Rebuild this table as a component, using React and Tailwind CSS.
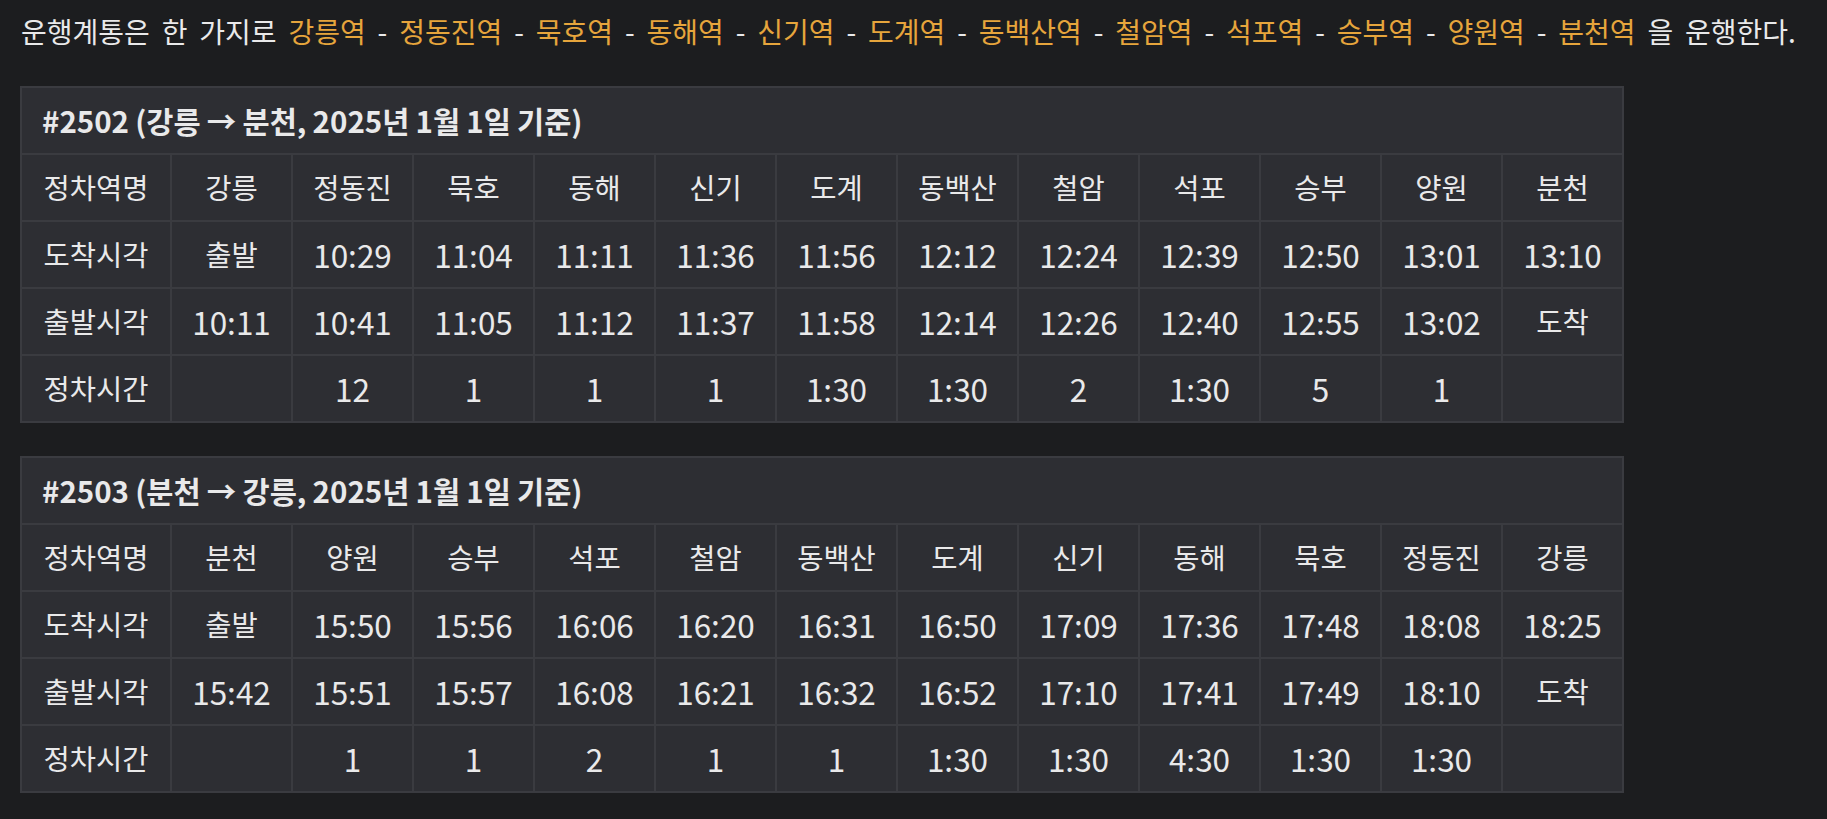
import React from "react";

const stations = [
  "강릉역", "정동진역", "묵호역", "동해역", "신기역", "도계역",
  "동백산역", "철암역", "석포역", "승부역", "양원역", "분천역",
];

const trains = [
  {
    title: "#2502 (강릉 → 분천, 2025년 1월 1일 기준)",
    rows: [
      ["정차역명", "강릉", "정동진", "묵호", "동해", "신기", "도계", "동백산", "철암", "석포", "승부", "양원", "분천"],
      ["도착시각", "출발", "10:29", "11:04", "11:11", "11:36", "11:56", "12:12", "12:24", "12:39", "12:50", "13:01", "13:10"],
      ["출발시각", "10:11", "10:41", "11:05", "11:12", "11:37", "11:58", "12:14", "12:26", "12:40", "12:55", "13:02", "도착"],
      ["정차시간", "", "12", "1", "1", "1", "1:30", "1:30", "2", "1:30", "5", "1", ""],
    ],
  },
  {
    title: "#2503 (분천 → 강릉, 2025년 1월 1일 기준)",
    rows: [
      ["정차역명", "분천", "양원", "승부", "석포", "철암", "동백산", "도계", "신기", "동해", "묵호", "정동진", "강릉"],
      ["도착시각", "출발", "15:50", "15:56", "16:06", "16:20", "16:31", "16:50", "17:09", "17:36", "17:48", "18:08", "18:25"],
      ["출발시각", "15:42", "15:51", "15:57", "16:08", "16:21", "16:32", "16:52", "17:10", "17:41", "17:49", "18:10", "도착"],
      ["정차시간", "", "1", "1", "2", "1", "1", "1:30", "1:30", "4:30", "1:30", "1:30", ""],
    ],
  },
];

const isNumber = (s) => /^[0-9:]+$/.test(s);

function Timetable({ title, rows }) {
  return (
    <table className="table-fixed border-collapse bg-[#2d2e33] w-[1604px]">
      <colgroup>
        <col className="w-[150px]" />
        {rows[0].slice(1).map((_, i) => (
          <col key={i} />
        ))}
      </colgroup>
      <thead>
        <tr>
          <th colSpan={13} className="h-[67px] border-2 border-[#3a3b40] pl-[20px] text-left font-bold text-[29.5px] [word-spacing:-0.5px]">
            {title}
          </th>
        </tr>
      </thead>
      <tbody>
        {rows.map((row, r) => (
          <tr key={r}>
            {row.map((cell, c) => (
              <td
                key={c}
                className={
                  isNumber(cell)
                    ? "h-[67px] border-2 border-[#3a3b40] p-0 text-center text-[31.5px]"
                    : "h-[67px] border-2 border-[#3a3b40] p-0 text-center text-[28.5px]"
                }
              >
                {cell}
              </td>
            ))}
          </tr>
        ))}
      </tbody>
    </table>
  );
}

export default function App() {
  return (
    <div className="min-h-[819px] bg-[#1c1d1f] text-[#e9e9ea] px-[20px] pt-[10px] font-['Noto_Sans_CJK_KR',sans-serif]">
      <p className="ml-[1px] text-[28px] leading-[42px] [word-spacing:5.6px]">
        운행계통은 한 가지로{" "}
        {stations.map((s, i) => (
          <React.Fragment key={s}>
            <span className="text-[#e6a53c]">{s}</span>
            {i < stations.length - 1 ? " - " : " "}
          </React.Fragment>
        ))}
        을 운행한다.
      </p>
      <div className="mt-[34px] flex flex-col gap-[33px]">
        {trains.map((t) => (
          <Timetable key={t.title} title={t.title} rows={t.rows} />
        ))}
      </div>
    </div>
  );
}
